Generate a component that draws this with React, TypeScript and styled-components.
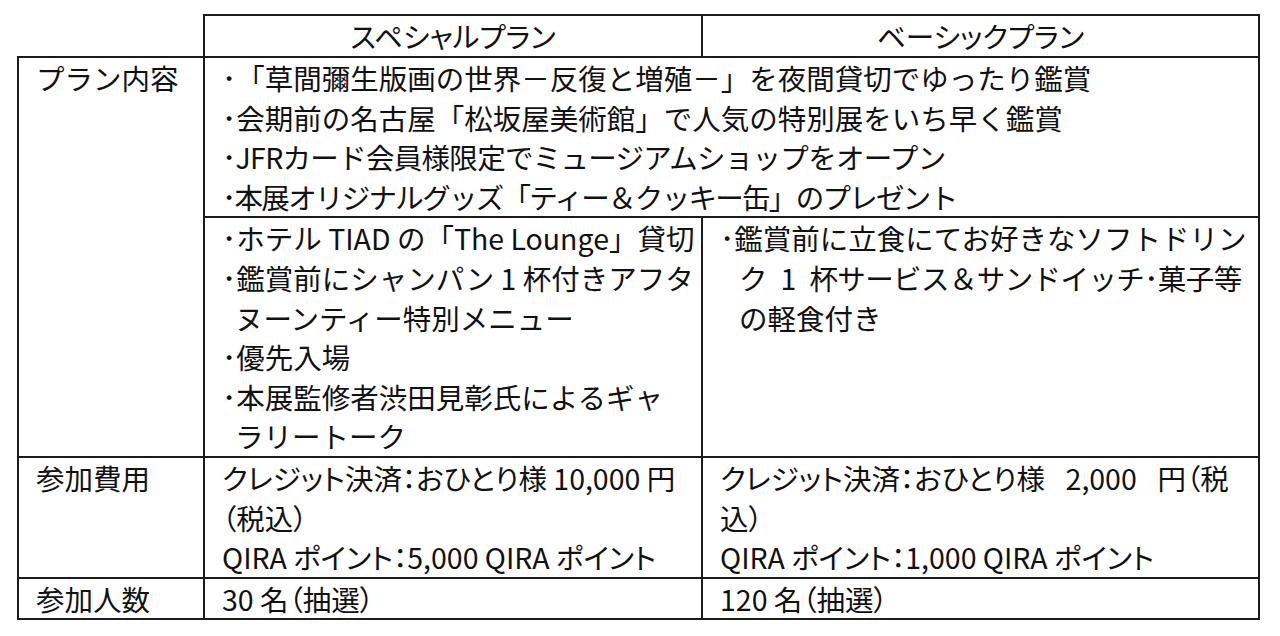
import React from "react";
import styled, { createGlobalStyle } from "styled-components";

const GlobalStyle = createGlobalStyle`
  html, body {
    margin: 0;
    padding: 0;
    background: #fff;
  }
  body {
    font-family: "Noto Sans CJK JP", "Noto Sans", sans-serif;
    color: #111;
  }
`;

const Page = styled.div`
  padding: 14px 0 0 17px;
`;

const PlanTable = styled.table`
  border-collapse: collapse;
  table-layout: fixed;
  width: 1241px;
  font-size: 28.5px;
  line-height: 39.6px;
`;

const Corner = styled.th`
  border: none;
  padding: 0;
`;

const HeaderCell = styled.th`
  border: 2px solid #1c1c1c;
  font-weight: normal;
  text-align: center;
  padding: 0;
  height: 40px;
  font-feature-settings: "palt";
`;

const LabelCell = styled.td`
  border: 2px solid #1c1c1c;
  vertical-align: top;
  padding: 0 0 0 17px;
`;

const Cell = styled.td`
  border: 2px solid #1c1c1c;
  vertical-align: top;
  padding: 0 0 0 17px;
  white-space: nowrap;
`;

// one printed line; $palt switches on proportional kana/punctuation widths
const Line = styled.div<{ $indent?: number; $palt?: boolean; $track?: number }>`
  display: block;
  padding-left: ${(p) => p.$indent ?? 0}px;
  letter-spacing: ${(p) => p.$track ?? 0}px;
  font-feature-settings: ${(p) => (p.$palt ? '"palt"' : "normal")};
`;

type Row = { text: string; indent?: number; palt?: boolean; track?: number };

const common: Row[] = [
  { text: "･「草間彌生版画の世界－反復と増殖－」を夜間貸切でゆったり鑑賞" },
  { text: "･会期前の名古屋「松坂屋美術館」で人気の特別展をいち早く鑑賞" },
  { text: "･JFRカード会員様限定でミュージアムショップをオープン", track: -0.7 },
  { text: "･本展オリジナルグッズ「ティー＆クッキー缶」のプレゼント", track: -1.7 },
];

const special: Row[] = [
  { text: "･ホテル TIAD の「The Lounge」貸切" },
  { text: "･鑑賞前にシャンパン 1 杯付きアフタ" },
  { text: "ヌーンティー特別メニュー", indent: 13 },
  { text: "･優先入場" },
  { text: "･本展監修者渋田見彰氏によるギャ" },
  { text: "ラリートーク", indent: 13 },
];

const basic: Row[] = [
  { text: "･鑑賞前に立食にてお好きなソフトドリン" },
  { text: "ク\u20021\u2002杯サービス＆サンドイッチ･菓子等", indent: 19, track: -0.6 },
  { text: "の軽食付き", indent: 19 },
];

const specialFee: Row[] = [
  { text: "クレジット決済：おひとり様 10,000 円", palt: true },
  { text: "（税込）", palt: true },
  { text: "QIRA ポイント：5,000 QIRA ポイント", palt: true },
];

const basicFee: Row[] = [
  { text: "クレジット決済：おひとり様\u2002 2,000\u2002 円（税", palt: true },
  { text: "込）", palt: true },
  { text: "QIRA ポイント：1,000 QIRA ポイント", palt: true },
];

const lines = (rows: Row[]) =>
  rows.map((r) => (
    <Line key={r.text} $indent={r.indent} $palt={r.palt} $track={r.track}>
      {r.text}
    </Line>
  ));

export default function App() {
  return (
    <Page>
      <GlobalStyle />
      <PlanTable>
        <colgroup>
          <col style={{ width: 186 }} />
          <col style={{ width: 498 }} />
          <col style={{ width: 557 }} />
        </colgroup>
        <thead>
          <tr>
            <Corner />
            <HeaderCell>スペシャルプラン</HeaderCell>
            <HeaderCell>ベーシックプラン</HeaderCell>
          </tr>
        </thead>
        <tbody>
          <tr>
            <LabelCell rowSpan={2}>プラン内容</LabelCell>
            <Cell colSpan={2}>{lines(common)}</Cell>
          </tr>
          <tr>
            <Cell>{lines(special)}</Cell>
            <Cell>{lines(basic)}</Cell>
          </tr>
          <tr>
            <LabelCell>参加費用</LabelCell>
            <Cell>{lines(specialFee)}</Cell>
            <Cell>{lines(basicFee)}</Cell>
          </tr>
          <tr>
            <LabelCell>参加人数</LabelCell>
            <Cell>{lines([{ text: "30 名（抽選）", palt: true }])}</Cell>
            <Cell>{lines([{ text: "120 名（抽選）", palt: true }])}</Cell>
          </tr>
        </tbody>
      </PlanTable>
    </Page>
  );
}
